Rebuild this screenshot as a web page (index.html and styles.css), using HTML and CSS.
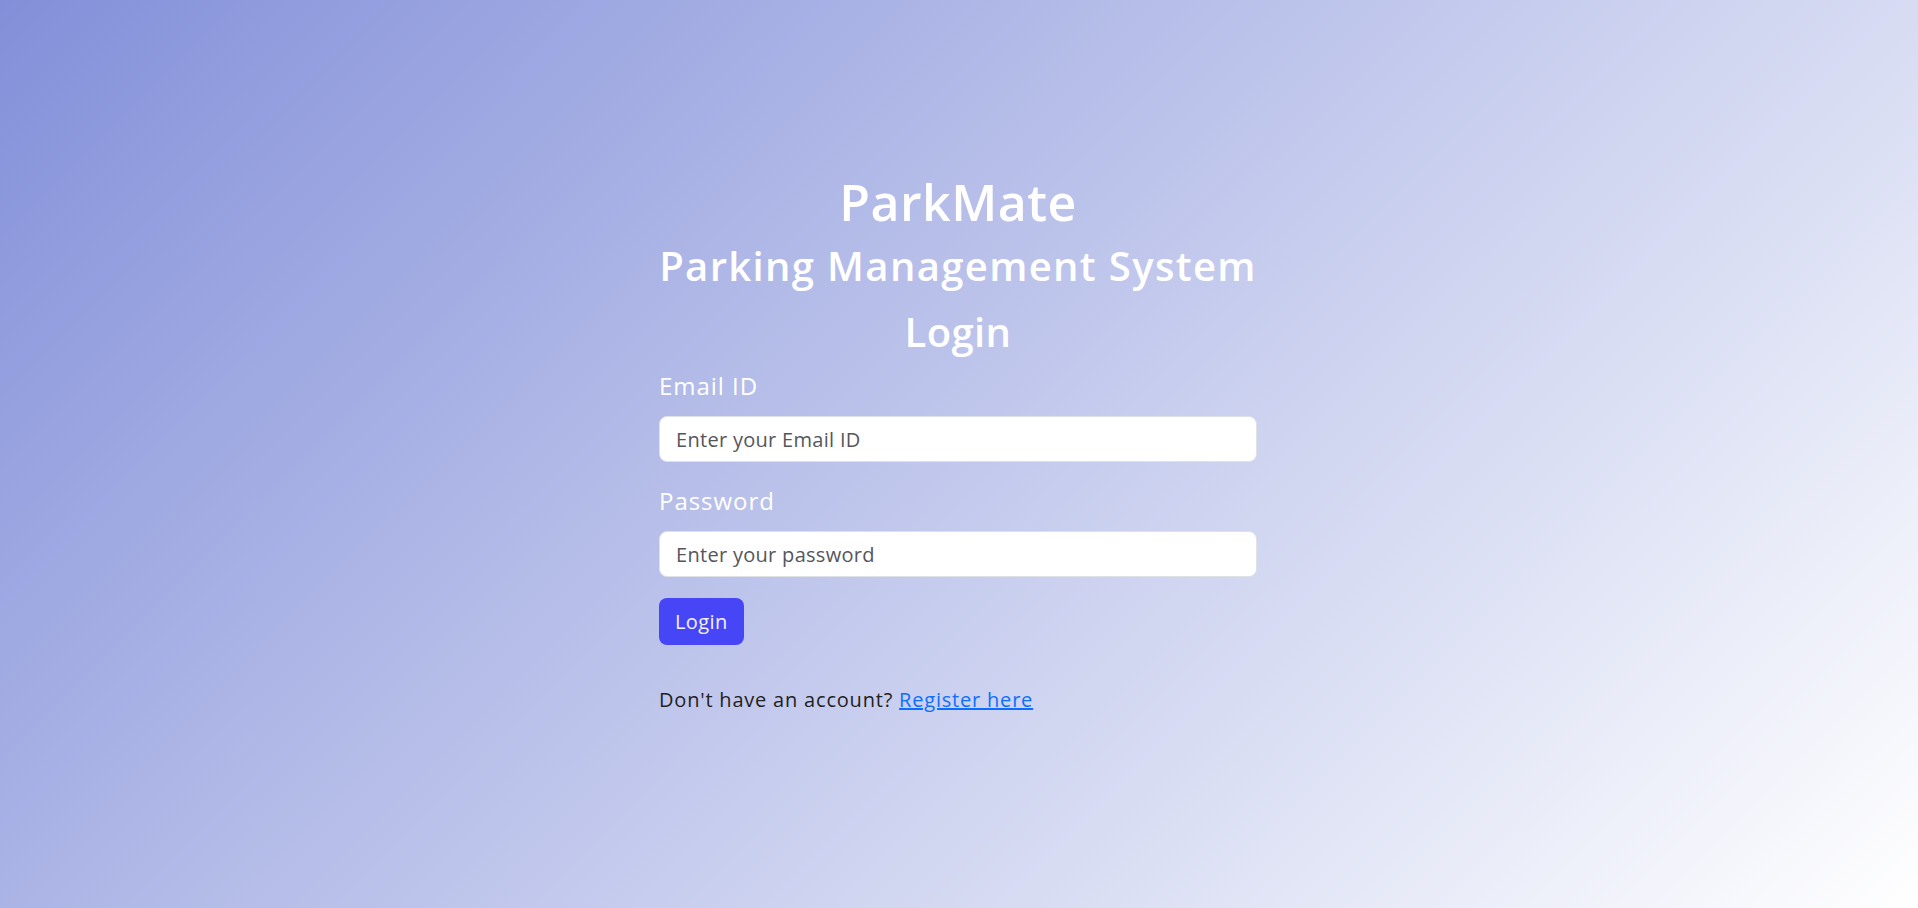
FILE: index.html
```html
<!DOCTYPE html>
<html lang="en">
<head>
<meta charset="utf-8">
<title>ParkMate - Login</title>
<link rel="stylesheet" href="styles.css">
</head>
<body>
<main class="page">
  <section class="login-box">
    <h1 class="brand">ParkMate</h1>
    <h2 class="subtitle">Parking Management System</h2>
    <h2 class="form-title">Login</h2>
    <form class="login-form" onsubmit="return false;">
      <label class="field-label" for="email">Email ID</label>
      <input class="field-input" id="email" type="email" placeholder="Enter your Email ID">
      <label class="field-label second" for="password">Password</label>
      <input class="field-input" id="password" type="password" placeholder="Enter your password">
      <button class="btn-login" type="submit">Login</button>
    </form>
    <p class="register">Don't have an account? <a href="#" class="register-link">Register here</a></p>
  </section>
</main>
</body>
</html>
```

FILE: styles.css
```css
* { box-sizing: border-box; }
html, body { margin: 0; padding: 0; height: 100%; }
body {
  font-family: "Open Sans", "Liberation Sans", sans-serif;
  background: linear-gradient(135deg, #8390d9 0%, #ffffff 100%);
  color: #212529;
  min-height: 908px;
}
.page { padding: 172px 2px 0 0; }
.login-box { width: 598px; margin: 0 auto; }
.brand {
  margin: 0; text-align: center; color: #fff;
  font-size: 50px; line-height: 60px; font-weight: 600; letter-spacing: 0.01em;
}
.subtitle {
  margin: 10px 0 0; text-align: center; color: #fff;
  font-size: 40px; line-height: 48px; font-weight: 600; letter-spacing: 0.034em;
}
.form-title {
  margin: 18px 0 0; text-align: center; color: #fff;
  font-size: 40px; line-height: 48px; font-weight: 600; letter-spacing: 0.01em;
}
.login-form { display: flex; flex-direction: column; align-items: flex-start; margin-top: 12px; }
.field-label {
  color: #fff; font-size: 24px; line-height: 36px; font-weight: 400;
  letter-spacing: 0.04em; margin-bottom: 12px;
}
.field-label.second { margin-top: 21px; }
.field-input {
  width: 100%; height: 46px; padding: 0 16px;
  border: 1px solid #dee2e6; border-radius: 8px; background: #fff;
  font-family: inherit; font-size: 20px; color: #212529; outline: none;
  letter-spacing: 0.015em;
}
.field-input::placeholder { color: #55565c; opacity: 1; }
.btn-login {
  margin-top: 21px; height: 47px; padding: 0 16px;
  background: #4646f6; color: #f2f2ff; border: 0; border-radius: 8px;
  font-family: inherit; font-size: 20px; font-weight: 500; cursor: pointer;
  letter-spacing: 0.02em;
}
.register {
  margin: 40px 0 0; font-size: 20px; line-height: 30px; color: #222;
  letter-spacing: 0.04em;
}
.register-link { color: #0d6efd; text-decoration: underline; }
```
